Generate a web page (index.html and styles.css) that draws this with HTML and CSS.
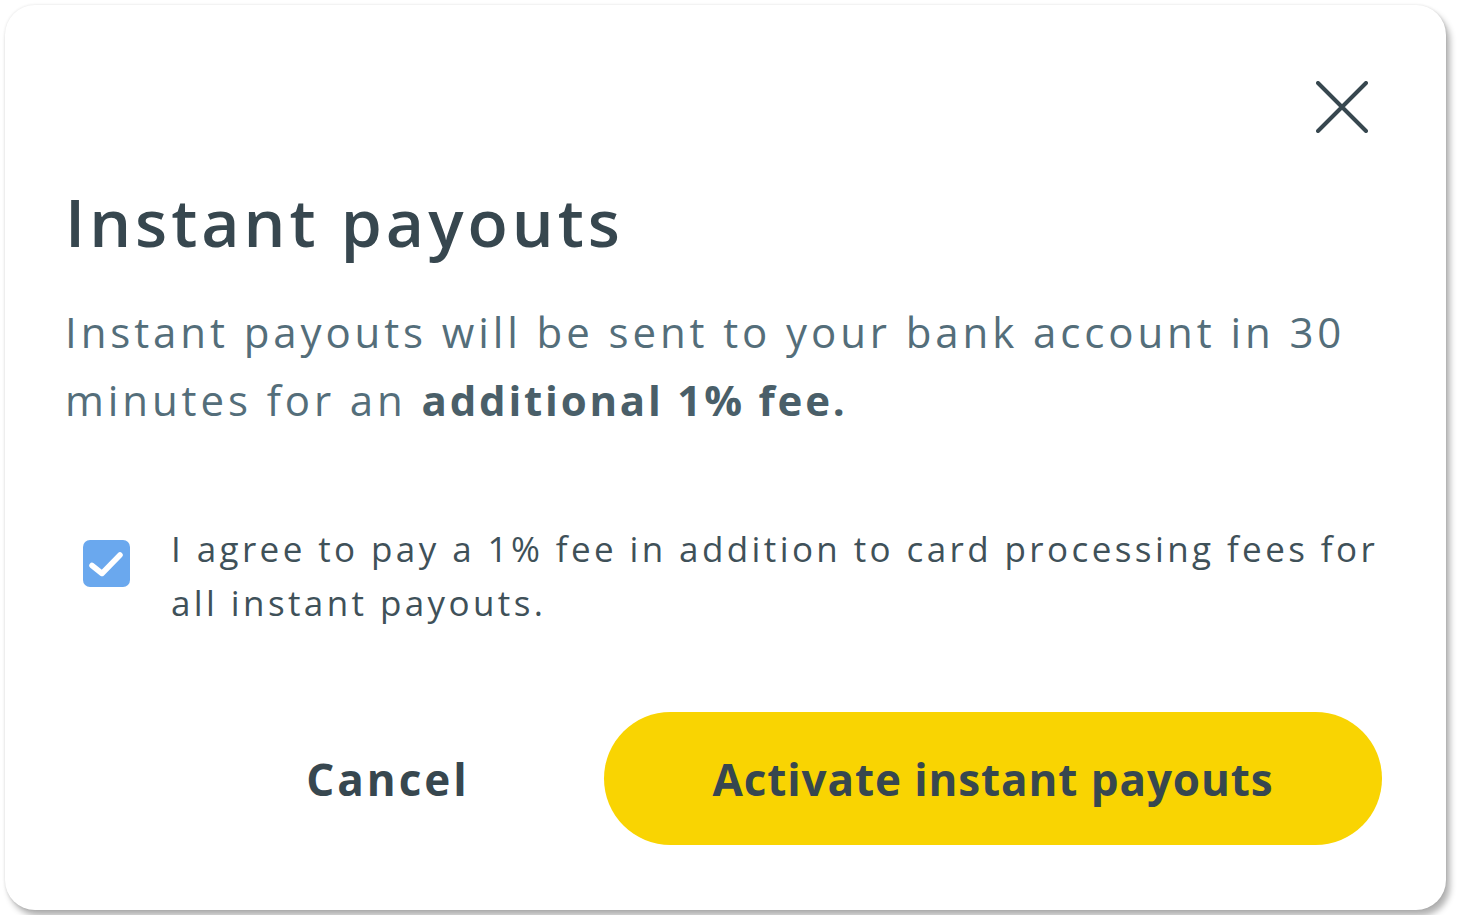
FILE: index.html
```html
<!DOCTYPE html>
<html lang="en">
<head>
    <meta charset="UTF-8">
    <meta name="viewport" content="width=device-width, initial-scale=1.0">
    <title>Instant payouts</title>
    <link rel="stylesheet" href="styles.css">
</head>
<body>
    <div class="modal">
        <div class="modal-top">
            <button class="close-btn" aria-label="Close">
                <svg width="52" height="52" viewBox="0 0 52 52">
                    <path d="M2 2 L50 50 M50 2 L2 50" stroke="#37474f" stroke-width="4" stroke-linecap="round" fill="none"/>
                </svg>
            </button>
        </div>

        <h1>Instant payouts</h1>
        <p class="intro">Instant payouts will be sent to your bank account in 30 minutes for an <strong>additional 1% fee.</strong></p>

        <label class="agree">
            <span class="checkbox">
                <svg width="47" height="47" viewBox="0 0 47 47">
                    <path d="M9 25.5 L19 33.5 L37 15" stroke="#fff" stroke-width="5.5" stroke-linecap="round" stroke-linejoin="round" fill="none"/>
                </svg>
            </span>
            <span class="agree-text">I agree to pay a 1% fee in addition to card processing fees for all instant payouts.</span>
        </label>

        <div class="actions">
            <button class="cancel-btn">Cancel</button>
            <button class="activate-btn">Activate instant payouts</button>
        </div>
    </div>
</body>
</html>
```

FILE: styles.css
```css
body {
    margin: 0;
    background-color: #fff;
    font-family: "Open Sans", "Noto Sans", sans-serif;
}
.modal {
    box-sizing: border-box;
    width: 1441px;
    height: 905px;
    margin: 5px;
    padding: 76px 64px 65px 62px;
    background-color: #fff;
    border-radius: 30px;
    box-shadow: 4px 6px 6px rgba(0, 0, 0, 0.3), 0 0 3px rgba(0, 0, 0, 0.12);
    display: flex;
    flex-direction: column;
}
.modal-top {
    display: flex;
    justify-content: flex-end;
    padding-right: 14px;
}
.close-btn {
    width: 52px;
    height: 52px;
    padding: 0;
    border: none;
    background: none;
    cursor: pointer;
}
.close-btn svg {
    display: block;
}
h1 {
    margin: 48px 0 0 -2px;
    font-size: 66px;
    line-height: 80px;
    font-weight: 600;
    color: #37474f;
    letter-spacing: 4px;
}
.intro {
    margin: 37px 0 0 -2px;
    font-size: 42px;
    line-height: 68px;
    color: #546e7a;
    letter-spacing: 3.9px;
}
.intro strong {
    font-weight: 700;
    color: #4a5f69;
    letter-spacing: 2.8px;
}
.agree {
    display: flex;
    align-items: flex-start;
    gap: 41px;
    margin: 88px 0 0 16px;
    cursor: pointer;
}
.checkbox {
    flex: none;
    width: 47px;
    height: 47px;
    margin-top: 18px;
    border-radius: 7px;
    background-color: #6aa8ee;
}
.checkbox svg {
    display: block;
}
.agree-text {
    font-size: 35px;
    line-height: 54px;
    color: #3f5159;
    letter-spacing: 3.4px;
}
.actions {
    display: flex;
    justify-content: flex-end;
    align-items: center;
    gap: 56px;
    margin-top: auto;
}
.cancel-btn,
.activate-btn {
    font-family: "Open Sans", "Noto Sans", sans-serif;
    font-size: 44px;
    font-weight: 700;
    color: #37474f;
    letter-spacing: 0.9px;
    border: none;
    cursor: pointer;
}
.cancel-btn {
    width: 320px;
    height: 133px;
    background: none;
    letter-spacing: 3px;
}
.activate-btn {
    width: 778px;
    height: 133px;
    border-radius: 67px;
    background-color: #f9d402;
}
```
